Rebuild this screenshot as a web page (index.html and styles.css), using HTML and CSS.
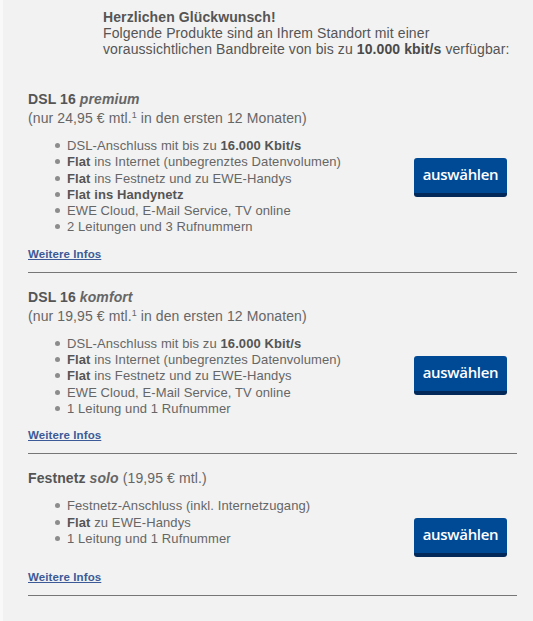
FILE: index.html
```html
<!DOCTYPE html>
<html lang="de">
<head>
<meta charset="utf-8">
<title>Produkte</title>
<link rel="stylesheet" href="styles.css">
</head>
<body>
<div class="page">
  <div class="intro">
    <div class="intro-head">Herzlichen Glückwunsch!</div>
    <div>Folgende Produkte sind an Ihrem Standort mit einer</div>
    <div>voraussichtlichen Bandbreite von bis zu <b>10.000 kbit/s</b> verfügbar:</div>
  </div>

  <section class="product product-first">
    <div class="title">DSL 16 <em>premium</em></div>
    <div class="price">(nur 24,95 € mtl.<sup>1</sup> in den ersten 12 Monaten)</div>
    <div class="row">
      <ul class="features">
        <li>DSL-Anschluss mit bis zu <b>16.000 Kbit/s</b></li>
        <li><b>Flat</b> ins Internet (unbegrenztes Datenvolumen)</li>
        <li><b>Flat</b> ins Festnetz und zu EWE-Handys</li>
        <li><b>Flat ins Handynetz</b></li>
        <li>EWE Cloud, E-Mail Service, TV online</li>
        <li>2 Leitungen und 3 Rufnummern</li>
      </ul>
      <button class="choose" type="button">auswählen</button>
    </div>
    <a class="more" href="#">Weitere Infos</a>
  </section>

  <section class="product">
    <div class="title">DSL 16 <em>komfort</em></div>
    <div class="price">(nur 19,95 € mtl.<sup>1</sup> in den ersten 12 Monaten)</div>
    <div class="row">
      <ul class="features">
        <li>DSL-Anschluss mit bis zu <b>16.000 Kbit/s</b></li>
        <li><b>Flat</b> ins Internet (unbegrenztes Datenvolumen)</li>
        <li><b>Flat</b> ins Festnetz und zu EWE-Handys</li>
        <li>EWE Cloud, E-Mail Service, TV online</li>
        <li>1 Leitung und 1 Rufnummer</li>
      </ul>
      <button class="choose" type="button">auswählen</button>
    </div>
    <a class="more" href="#">Weitere Infos</a>
  </section>

  <section class="product">
    <div class="title">Festnetz <em>solo</em> <span class="title-price">(19,95 € mtl.)</span></div>
    <div class="row">
      <ul class="features">
        <li>Festnetz-Anschluss (inkl. Internetzugang)</li>
        <li><b>Flat</b> zu EWE-Handys</li>
        <li>1 Leitung und 1 Rufnummer</li>
      </ul>
      <button class="choose" type="button">auswählen</button>
    </div>
    <a class="more" href="#">Weitere Infos</a>
  </section>
</div>
</body>
</html>
```

FILE: styles.css
```css
html, body {
  margin: 0;
  padding: 0;
}

body {
  background: #f2f2f2;
  border-left: 3px solid #f9f9f9;
  min-height: 621px;
  box-sizing: border-box;
  font-family: "Liberation Sans", Arial, sans-serif;
  color: #5a5a5a;
  letter-spacing: 0.1px;
}

.page {
  padding: 9px 16px 0 25px;
}

.intro {
  margin-left: 75px;
  font-size: 14px;
  line-height: 16px;
  color: #555;
}

.intro-head {
  font-weight: bold;
}

.intro b {
  color: #4a4a4a;
}

.product {
  border-bottom: 1px solid #767676;
  padding-top: 16px;
}

.product-first {
  padding-top: 34px;
}

.title {
  font-size: 14px;
  line-height: 16px;
  font-weight: bold;
  color: #555;
}

.title em {
  font-style: italic;
  color: #666;
}

.title-price {
  font-weight: normal;
  color: #666;
}

.price {
  margin-top: 3px;
  font-size: 14px;
  line-height: 16px;
  color: #666;
}

.price sup {
  font-size: 9px;
  line-height: 0;
  vertical-align: 5px;
}

.row {
  display: flex;
  align-items: flex-start;
  justify-content: space-between;
  margin-top: 12px;
}

.features {
  margin: 0;
  padding: 0 0 0 39px;
  font-size: 13px;
  line-height: 16.3px;
  color: #666;
  list-style: none;
}

.features li::before {
  content: "";
  display: inline-block;
  width: 5px;
  height: 5px;
  border-radius: 50%;
  background: #8c8c8c;
  margin: 0 7px 0 -12px;
  vertical-align: 2px;
}

.features b {
  color: #555;
}

.choose {
  margin: 20px 10px 2px 0;
  width: 93px;
  height: 39px;
  padding: 0 0 3px;
  border: 0;
  border-bottom: 4px solid #03295a;
  border-radius: 3px;
  background: #004a95;
  color: #ffffff;
  font-family: "Open Sans", "Noto Sans", sans-serif;
  font-size: 15px;
  font-weight: 600;
  letter-spacing: -0.3px;
  cursor: pointer;
  box-sizing: border-box;
}

.more {
  display: block;
  margin: 11px 0 11px;
  width: max-content;
  font-size: 11.5px;
  line-height: 14px;
  font-weight: bold;
  color: #3c5a98;
  text-decoration: underline;
}
```
